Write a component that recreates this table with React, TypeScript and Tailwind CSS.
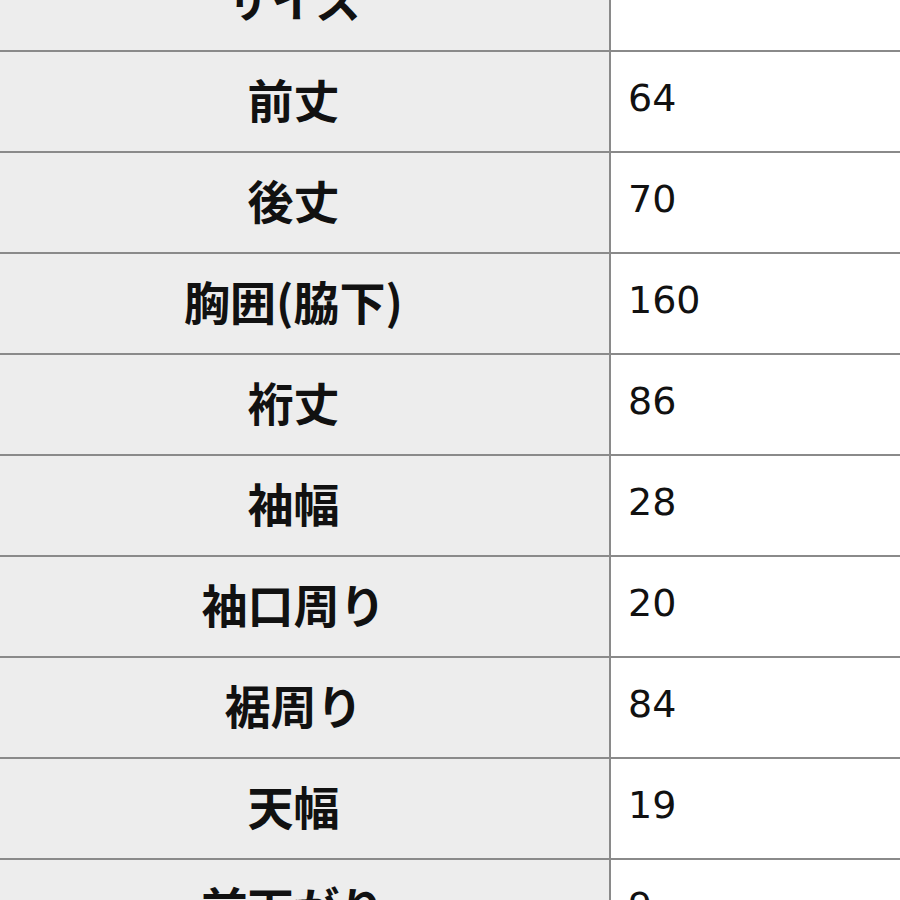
import React from 'react';

interface SizeRow {
  label: string;
  value: string;
}

const rows: SizeRow[] = [
  { label: 'サイズ', value: '' },
  { label: '前丈', value: '64' },
  { label: '後丈', value: '70' },
  { label: '胸囲(脇下)', value: '160' },
  { label: '裄丈', value: '86' },
  { label: '袖幅', value: '28' },
  { label: '袖口周り', value: '20' },
  { label: '裾周り', value: '84' },
  { label: '天幅', value: '19' },
  { label: '前下がり', value: '9' },
];

const App: React.FC = () => {
  return (
    <div
      className="w-[900px] h-[900px] overflow-hidden bg-white text-[#111]"
      style={{ fontFamily: '"Noto Sans CJK JP", "Noto Sans", sans-serif' }}
    >
      <div className="-mt-[49px] flex flex-col">
        {rows.map(row => (
          <div key={row.label} className="flex h-[101px] border-b-2 border-[#8a8a8a]">
            <div className="w-[611px] flex items-center justify-center pr-[22px] pb-[7px] bg-[#ededed] border-r-2 border-[#8a8a8a] text-[46px] font-semibold leading-none">
              {row.label}
            </div>
            <div
              className="flex-1 flex items-center pl-[17px] pb-[8px] text-[38px] leading-none"
              style={{ fontFamily: '"DejaVu Sans", sans-serif' }}
            >
              {row.value}
            </div>
          </div>
        ))}
      </div>
    </div>
  );
};

export default App;
